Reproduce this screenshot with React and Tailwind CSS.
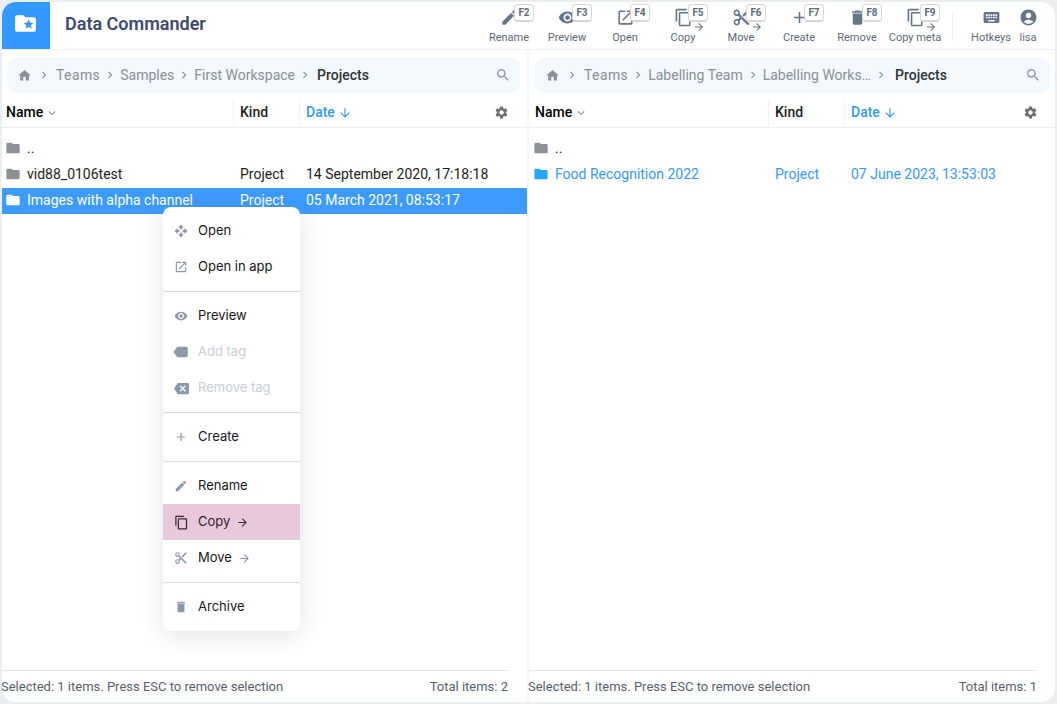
import React from 'react';
import {
  MdAccountCircle, MdAdd, MdArrowForward, MdBackspace, MdContentCopy, MdContentCut, MdDelete,
  MdEdit, MdFolder, MdFolderSpecial, MdHome, MdKeyboard, MdKeyboardArrowDown, MdChevronRight,
  MdLabel, MdOpenInNew, MdOpenWith, MdSearch, MdSettings, MdVisibility,
} from 'react-icons/md';

const tools = [
  { label: 'Rename', key: 'F2', icon: MdEdit },
  { label: 'Preview', key: 'F3', icon: MdVisibility },
  { label: 'Open', key: 'F4', icon: MdOpenInNew },
  { label: 'Copy', key: 'F5', icon: MdContentCopy, arrow: true },
  { label: 'Move', key: 'F6', icon: MdContentCut, arrow: true },
  { label: 'Create', key: 'F7', icon: MdAdd },
  { label: 'Remove', key: 'F8', icon: MdDelete },
  { label: 'Copy meta', key: 'F9', icon: MdContentCopy, arrow: true },
];

function ToolButton({ tool }) {
  const Icon = tool.icon;
  return (
    <div className="relative w-[58px] h-[47px] flex flex-col items-center shrink-0">
      <Icon className="mt-[6px] text-[#667487]" size={19} />
      <span className="absolute left-[34px] top-[2px] w-[20px] h-[18px] bg-white border border-[#d4d7da] border-b-2 rounded-[4px] text-[10px] font-bold text-[#5f6b7a] flex items-center justify-center">
        {tool.key}
      </span>
      {tool.arrow && <MdArrowForward className="absolute left-[39px] top-[19px] text-[#667487]" size={12} />}
      <span className="absolute top-[29px] left-0 right-0 text-center text-[11px] leading-[14px] text-[#5c6878] whitespace-nowrap">
        {tool.label}
      </span>
    </div>
  );
}

function Breadcrumb({ crumbs, width, lastGap }) {
  return (
    <div className="h-[36px] rounded-[10px] bg-[#f3f8fc] flex items-center pl-[10px] pr-[9px] text-[14px] text-[#8b9097]" style={{ width }}>
      <MdHome className="text-[#8a9096]" size={15} />
      <MdChevronRight className="ml-[5px] mr-[5px] text-[#8a9096]" size={14} />
      {crumbs.map((c, i) => (
        <React.Fragment key={c}>
          <span className={`whitespace-nowrap ${i === 0 ? 'tracking-[0.4px]' : ''}`}>{c}</span>
          <MdChevronRight className="mx-[3px] text-[#8a9096]" size={14} />
        </React.Fragment>
      ))}
      <span className="font-medium text-[#2f3337]" style={{ marginLeft: lastGap }}>Projects</span>
      <MdSearch className="ml-auto text-[#8f959b]" size={16} />
    </div>
  );
}

function TableHead({ nameW, kindW, dateW, pad }) {
  return (
    <div className="flex items-center h-[30px] border-b border-[#eceef0] text-[14px] font-medium">
      <div className="h-[26px] flex items-center border-r border-[#f0f1f2] text-black shrink-0" style={{ width: nameW, paddingLeft: pad }}>
        Name
        <MdKeyboardArrowDown className="ml-[2px] text-[#8a9096]" size={14} />
      </div>
      <div className="h-[26px] flex items-center pl-[6px] border-r border-[#f0f1f2] text-[#1c1f22] shrink-0" style={{ width: kindW }}>
        Kind
      </div>
      <div className="h-[26px] flex items-center pl-[6px] text-[#3399ff] shrink-0" style={{ width: dateW }}>
        Date
        <MdArrowForward className="ml-[3px] rotate-90" size={14} />
      </div>
      <MdSettings className="text-[#6b7075]" size={15} />
    </div>
  );
}

function Row({ name, kind, date, nameW, kindW, pad, variant }) {
  const rowCls = variant === 'selected' ? 'bg-[#3d9bff] text-white' : variant === 'link' ? 'text-[#3399ff]' : 'text-[#1b1d20]';
  const iconCls = variant === 'selected' ? 'text-white' : variant === 'link' ? 'text-[#25a9f5]' : 'text-[#8d9296]';
  return (
    <div className={`flex items-center h-[26px] pb-[2px] text-[14px] ${rowCls}`}>
      <div className="flex items-center shrink-0" style={{ width: nameW, paddingLeft: pad }}>
        <MdFolder className={`mb-[1px] ${iconCls}`} size={16} />
        <span className="ml-[6px] whitespace-nowrap">{name}</span>
      </div>
      <div className="pl-[6px] shrink-0" style={{ width: kindW }}>{kind}</div>
      <div className="pl-[6px] whitespace-nowrap">{date}</div>
    </div>
  );
}

function Footer({ total, lineW }) {
  return (
    <div className="mt-auto h-[32px] border-t border-[#e3e5e7] flex items-center justify-between text-[13px] text-[#565f6b]" style={{ width: lineW }}>
      <span className="-ml-[1px]">Selected: 1 items. Press ESC to remove selection</span>
      <span>Total items: {total}</span>
    </div>
  );
}

function MenuItem({ icon: Icon, label, disabled, active, arrow, iconClass = '', size = 14 }) {
  const textCls = disabled ? 'text-[#c8ced6]' : active ? 'text-[#33222c]' : 'text-[#16181b]';
  const iconCls = active ? 'text-[#3a2a33]' : 'text-[#8c99a8]';
  return (
    <div className={`h-[36px] flex items-center text-[13px] ${active ? 'bg-[#e8c8dc]' : ''} ${textCls}`} style={{ fontFamily: 'Inter, sans-serif' }}>
      <span className="w-[35px] shrink-0 flex justify-center pl-[1px]">
        <Icon className={`${iconCls} ${iconClass}`} size={size} />
      </span>
      <span className="whitespace-nowrap">{label}</span>
      {arrow && <MdArrowForward className={`ml-[6px] ${iconCls}`} size={13} />}
    </div>
  );
}

function Sep() {
  return <div className="my-[6px] h-px bg-[#d5dde6]" />;
}

export default function App() {
  return (
    <div className="w-[1057px] h-[704px] bg-[#e9eef3] p-[2px] overflow-hidden" style={{ fontFamily: 'Roboto, sans-serif' }}>
      <div className="relative w-full h-full bg-white rounded-[14px] overflow-hidden flex flex-col">
        {/* Top bar */}
        <div className="h-[47px] border-b border-[#eceef0] flex items-center shrink-0 box-content">
          <div className="w-[48px] h-[47px] bg-[#3399ff] flex items-center justify-center shrink-0">
            <MdFolderSpecial className="text-white mb-[5px] mr-[2px]" size={25} />
          </div>
          <div className="ml-[15px] mb-[5px] text-[18px] font-semibold text-[#3d4b6e]">Data Commander</div>
          <div className="ml-auto flex items-start">
            {tools.map((t) => <ToolButton key={t.key} tool={t} />)}
            <div className="ml-[8px] mt-[9px] w-px h-[30px] bg-[#eceef0]" />
            <div className="relative w-[58px] ml-[9px] h-[47px] flex flex-col items-center">
              <MdKeyboard className="mt-[6px] text-[#667487]" size={19} />
              <span className="absolute top-[29px] text-[11px] leading-[14px] text-[#5c6878]">Hotkeys</span>
            </div>
            <div className="relative w-[32px] mr-[11px] h-[47px] flex flex-col items-center -ml-[8px]">
              <MdAccountCircle className="mt-[6px] text-[#667487]" size={19} />
              <span className="absolute top-[29px] text-[11px] leading-[14px] text-[#5c6878]">lisa</span>
            </div>
          </div>
        </div>

        {/* Panels */}
        <div className="flex flex-1 min-h-0">
          <div className="w-[525px] border-r-2 border-[#f5f6f7] flex flex-col shrink-0 box-content">
            <div className="pt-[7px] pl-[5px]">
              <Breadcrumb crumbs={['Teams', 'Samples', 'First Workspace']} width="513px" lastGap="2px" />
            </div>
            <div className="mt-[5px]"><TableHead nameW="232px" kindW="66px" dateW="194px" pad="4px" /></div>
            <div className="pt-[8px]">
              <Row name=".." nameW="232px" kindW="66px" pad="3px" />
              <Row name="vid88_0106test" kind="Project" date="14 September 2020, 17:18:18" nameW="232px" kindW="66px" pad="3px" />
              <Row name="Images with alpha channel" kind="Project" date="05 March 2021, 08:53:17" nameW="232px" kindW="66px" pad="3px" variant="selected" />
            </div>
            <Footer total={2} lineW="506px" />
          </div>
          <div className="flex-1 flex flex-col">
            <div className="pt-[7px] pl-[6px]">
              <Breadcrumb crumbs={['Teams', 'Labelling Team', 'Labelling Works…']} width="515px" lastGap="4px" />
            </div>
            <div className="mt-[5px]"><TableHead nameW="240px" kindW="76px" dateW="178px" pad="6px" /></div>
            <div className="pt-[8px]">
              <Row name=".." nameW="240px" kindW="76px" pad="4px" />
              <Row name="Food Recognition 2022" kind="Project" date="07 June 2023, 13:53:03" nameW="240px" kindW="76px" pad="4px" variant="link" />
            </div>
            <Footer total={1} lineW="508px" />
          </div>
        </div>

        {/* Context menu */}
        <div className="absolute left-[161px] top-[205px] w-[137px] bg-white rounded-[8px] py-[6px] shadow-[0_4px_24px_rgba(40,50,70,0.14)]">
          <MenuItem icon={MdOpenWith} label="Open" />
          <MenuItem icon={MdOpenInNew} label="Open in app" />
          <Sep />
          <MenuItem icon={MdVisibility} label="Preview" />
          <MenuItem icon={MdLabel} label="Add tag" disabled iconClass="-scale-x-100" size={18} />
          <MenuItem icon={MdBackspace} label="Remove tag" disabled size={15} />
          <Sep />
          <MenuItem icon={MdAdd} label="Create" />
          <Sep />
          <MenuItem icon={MdEdit} label="Rename" />
          <MenuItem icon={MdContentCopy} label="Copy" active arrow size={15} />
          <MenuItem icon={MdContentCut} label="Move" arrow />
          <Sep />
          <MenuItem icon={MdDelete} label="Archive" />
        </div>
      </div>
    </div>
  );
}
